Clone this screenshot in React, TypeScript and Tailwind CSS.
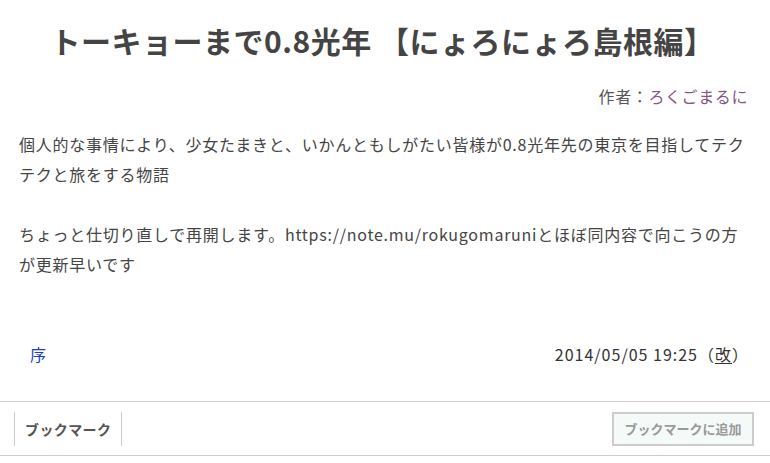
const jp = { fontFamily: '"Noto Sans CJK JP", "Noto Sans", sans-serif' };

export default function App() {
  return (
    <div className="min-h-[463px] w-[770px] bg-white text-[#444]" style={jp}>
      {/* タイトル */}
      <h1 className="pt-[18px] pr-[5px] text-center text-[30px] font-bold leading-[44px] tracking-[0.5px] text-[#444]">
        トーキョーまで0.8光年 【にょろにょろ島根編】
      </h1>

      <div className="mt-[22px] pr-[22px] text-right text-[16px] leading-[24px] tracking-[0.6px] text-[#555]">
        作者：<a className="text-[#845584]">ろくごまるに</a>
      </div>

      {/* あらすじ */}
      <p className="mt-[21px] pl-[19px] pr-[19px] text-[16px] leading-[30px] tracking-[0.75px] text-[#444]">
        個人的な事情により、少女たまきと、いかんともしがたい皆様が0.8光年先の東京を目指してテクテクと旅をする物語
        <br />
        <br />
        ちょっと仕切り直しで再開します。https://note.mu/rokugomaruniとほぼ同内容で向こうの方が更新早いです
      </p>

      {/* 目次 */}
      <div className="mt-[63px] flex items-center justify-between pl-[30px] pr-[21px] text-[16px] leading-[24px]">
        <a className="text-[#1a3cc8]">序</a>
        <span className="tracking-[1px] text-[#333]">
          2014/05/05 19:25（<span className="underline underline-offset-2">改</span>）
        </span>
      </div>

      {/* ブックマーク */}
      <div className="mt-[35px] flex items-center justify-between border-y border-[#ccc] pl-[14px] pr-[16px] pt-[10px] pb-[9px]">
        <div className="flex h-[34px] items-center border-x border-[#ccc] px-[10px] text-[14px] font-bold tracking-[0.4px] text-[#555]">
          ブックマーク
        </div>
        <button className="flex h-[34px] w-[142px] items-center justify-center border-2 border-[#ccc] bg-[#f4faf8] text-[13px] font-bold text-[#999]">
          ブックマークに追加
        </button>
      </div>
    </div>
  );
}
